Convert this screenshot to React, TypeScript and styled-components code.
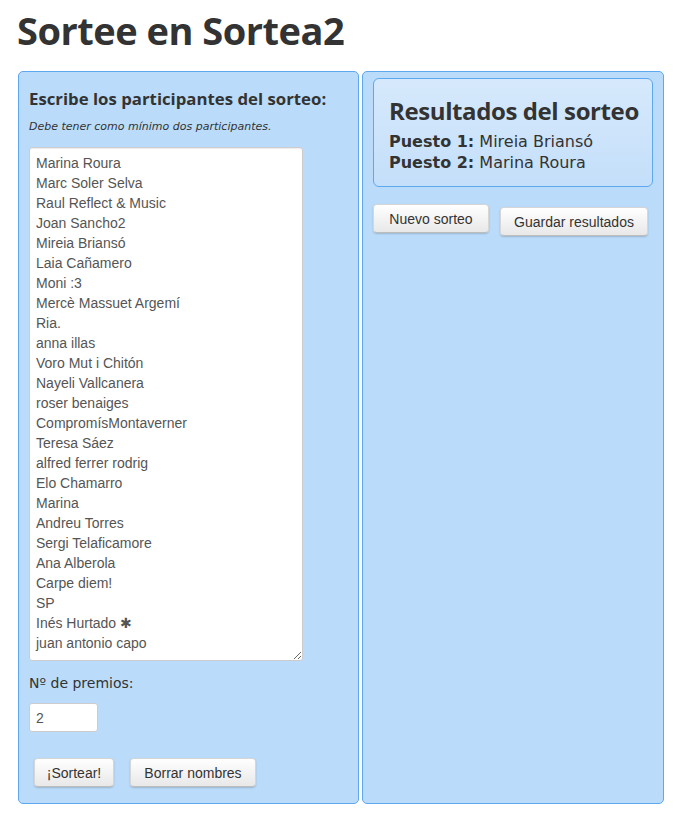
import React from 'react';
import styled, { createGlobalStyle } from 'styled-components';

const GlobalStyle = createGlobalStyle`
  body {
    margin: 0;
    background: #ffffff;
    color: #333333;
    font-family: 'DejaVu Sans', Verdana, sans-serif;
  }
`;

const Page = styled.div`
  width: 684px;
  padding: 0 18px 0 18px;
  box-sizing: border-box;
`;

const Title = styled.h1`
  margin: 0 0 0 -1px;
  padding-top: 5px;
  height: 71px;
  box-sizing: border-box;
  font-family: 'Open Sans', sans-serif;
  font-weight: 700;
  font-size: 38px;
  letter-spacing: -0.5px;
  line-height: 50px;
  color: #333333;
`;

const Columns = styled.div`
  display: flex;
  gap: 3px;
  align-items: stretch;
`;

const Panel = styled.section<{ $width: number }>`
  width: ${(p) => p.$width}px;
  height: 733px;
  box-sizing: border-box;
  background: #badcfa;
  border: 1px solid #5ea8f0;
  border-radius: 5px;
  padding: 6px 10px 16px 10px;
  display: flex;
  flex-direction: column;
`;

const SectionTitle = styled.h2`
  margin: 9px 0 0 0;
  font-family: 'Open Sans', sans-serif;
  font-weight: 700;
  font-size: 16.8px;
  line-height: 24px;
  color: #333333;
  white-space: nowrap;
`;

const Note = styled.p`
  margin: 8px 0 0 0;
  font-style: italic;
  font-size: 11px;
  line-height: 16px;
  color: #333333;
`;

const Names = styled.textarea`
  margin-top: 12px;
  width: 274px;
  height: 514px;
  box-sizing: border-box;
  border: 1px solid #cccccc;
  border-radius: 3px;
  background: #ffffff;
  padding: 5px 6px 4px 6px;
  font-family: 'Liberation Sans', Arial, sans-serif;
  font-size: 14px;
  line-height: 20px;
  color: #555555;
  resize: vertical;
  overflow: hidden;
  box-shadow: inset 0 1px 1px rgba(0, 0, 0, 0.075);
`;

const Label = styled.label`
  margin-top: 12px;
  font-size: 14px;
  line-height: 20px;
  color: #333333;
`;

const NumberField = styled.input`
  margin-top: 10px;
  width: 69px;
  height: 29px;
  box-sizing: border-box;
  border: 1px solid #cccccc;
  border-radius: 3px;
  padding: 4px 6px;
  font-family: 'Liberation Sans', Arial, sans-serif;
  font-size: 14px;
  color: #555555;
  background: #ffffff;
`;

const ButtonRow = styled.div<{ $top: number; $indent: number; $gap: number }>`
  display: flex;
  align-items: flex-start;
  margin-top: ${(p) => p.$top}px;
  padding-left: ${(p) => p.$indent}px;
  gap: ${(p) => p.$gap}px;
`;

const Button = styled.button<{ $width: number; $drop?: number }>`
  width: ${(p) => p.$width}px;
  height: 29px;
  margin-top: ${(p) => p.$drop ?? 0}px;
  border: 1px solid #d6d6d6;
  border-bottom-color: #bdbdbd;
  border-radius: 4px;
  background: linear-gradient(#ffffff, #e8e8e8);
  box-shadow: 0 1px 2px rgba(0, 0, 0, 0.18);
  font-family: 'Liberation Sans', Arial, sans-serif;
  font-size: 14px;
  color: #333333;
  padding: 0;
  cursor: pointer;
`;

const Results = styled.div`
  height: 109px;
  box-sizing: border-box;
  border: 1px solid #5ea8f0;
  border-radius: 6px;
  background: linear-gradient(#d6e9fc, #c4dffa);
  padding: 15px 8px 0 15px;
`;

const ResultsTitle = styled.h2`
  margin: 0 0 3px 0;
  font-family: 'Open Sans', sans-serif;
  font-weight: 700;
  font-size: 24px;
  letter-spacing: -0.4px;
  line-height: 34px;
  color: #333333;
  white-space: nowrap;
`;

const Place = styled.div`
  font-size: 16px;
  line-height: 21px;
  color: #333333;
  white-space: nowrap;

  b {
    font-weight: 700;
  }
`;

const names = [
  'Marina Roura',
  'Marc Soler Selva',
  'Raul Reflect & Music',
  'Joan Sancho2',
  'Mireia Briansó',
  'Laia Cañamero',
  'Moni :3',
  'Mercè Massuet Argemí',
  'Ria.',
  'anna illas',
  'Voro Mut i Chitón',
  'Nayeli Vallcanera',
  'roser benaiges',
  'CompromísMontaverner',
  'Teresa Sáez',
  'alfred ferrer rodrig',
  'Elo Chamarro',
  'Marina',
  'Andreu Torres',
  'Sergi Telaficamore',
  'Ana Alberola',
  'Carpe diem!',
  'SP',
  'Inés Hurtado ✱',
  'juan antonio capo',
];

const winners = ['Mireia Briansó', 'Marina Roura'];

const App: React.FC = () => {
  return (
    <Page>
      <GlobalStyle />
      <Title>Sortee en Sortea2</Title>
      <Columns>
        <Panel $width={341}>
          <SectionTitle>Escribe los participantes del sorteo:</SectionTitle>
          <Note>Debe tener como mínimo dos participantes.</Note>
          <Names defaultValue={names.join('\n')} spellCheck={false} />
          <Label>Nº de premios:</Label>
          <NumberField defaultValue="2" />
          <ButtonRow $top={26} $indent={5} $gap={16}>
            <Button $width={80}>¡Sortear!</Button>
            <Button $width={126}>Borrar nombres</Button>
          </ButtonRow>
        </Panel>
        <Panel $width={302}>
          <Results>
            <ResultsTitle>Resultados del sorteo</ResultsTitle>
            {winners.map((w, i) => (
              <Place key={w}>
                <b>Puesto {i + 1}:</b> {w}
              </Place>
            ))}
          </Results>
          <ButtonRow $top={17} $indent={0} $gap={11}>
            <Button $width={116}>Nuevo sorteo</Button>
            <Button $width={148} $drop={3}>Guardar resultados</Button>
          </ButtonRow>
        </Panel>
      </Columns>
    </Page>
  );
};

export default App;
